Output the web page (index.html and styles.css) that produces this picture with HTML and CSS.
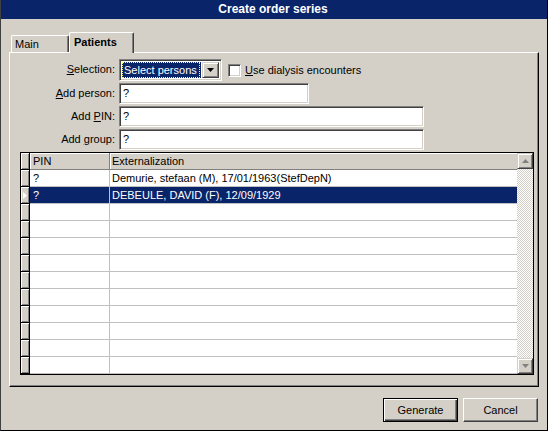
FILE: index.html
```html
<!DOCTYPE html>
<html>
<head>
<meta charset="utf-8">
<title>Create order series</title>
<link rel="stylesheet" href="styles.css">
</head>
<body>
<div class="window">
  <div class="titlebar">Create order series</div>
  <div class="body">
    <div class="tabs">
      <div class="tab">Main</div>
      <div class="tab active">Patients</div>
    </div>
    <div class="panel">
      <div class="form">
        <div class="lbl"><u>S</u>election:</div>
        <div class="ctrl-row">
          <div class="combo">
            <div class="combo-val"><span class="focus">Select persons</span></div>
            <div class="combo-btn"><svg width="7" height="4" viewBox="0 0 7 4"><path d="M0 0H7L3.5 4Z" fill="#000"/></svg></div>
          </div>
          <div class="check"><span class="box"></span><span><u>U</u>se dialysis encounters</span></div>
        </div>
        <div class="lbl"><u>A</u>dd person:</div>
        <div class="ctrl-row"><div class="input w-short">?</div></div>
        <div class="lbl">Add <u>P</u>IN:</div>
        <div class="ctrl-row"><div class="input w-long">?</div></div>
        <div class="lbl">Add <u>g</u>roup:</div>
        <div class="ctrl-row"><div class="input w-long">?</div></div>
      </div>
      <div class="grid">
        <div class="rows">
          <div class="row head">
            <div class="ind"></div>
            <div class="c1">PIN</div>
            <div class="c2">Externalization</div>
          </div>
          <div class="row">
            <div class="ind"></div>
            <div class="c1">?</div>
            <div class="c2">Demurie, stefaan (M), 17/01/1963(StefDepN)</div>
          </div>
          <div class="row sel">
            <div class="ind"><svg width="4" height="7" viewBox="0 0 4 7"><path d="M0 0L4 3.5L0 7Z" fill="#fff"/></svg></div>
            <div class="c1">?</div>
            <div class="c2">DEBEULE, DAVID (F), 12/09/1929</div>
          </div>
          <div class="row"><div class="ind"></div><div class="c1"></div><div class="c2"></div></div>
          <div class="row"><div class="ind"></div><div class="c1"></div><div class="c2"></div></div>
          <div class="row"><div class="ind"></div><div class="c1"></div><div class="c2"></div></div>
          <div class="row"><div class="ind"></div><div class="c1"></div><div class="c2"></div></div>
          <div class="row"><div class="ind"></div><div class="c1"></div><div class="c2"></div></div>
          <div class="row"><div class="ind"></div><div class="c1"></div><div class="c2"></div></div>
          <div class="row"><div class="ind"></div><div class="c1"></div><div class="c2"></div></div>
          <div class="row"><div class="ind"></div><div class="c1"></div><div class="c2"></div></div>
          <div class="row"><div class="ind"></div><div class="c1"></div><div class="c2"></div></div>
          <div class="row"><div class="ind"></div><div class="c1"></div><div class="c2"></div></div>
        </div>
        <div class="vscroll">
          <div class="sbtn"><svg width="7" height="4" viewBox="0 0 7 4"><path d="M0 4H7L3.5 0Z" fill="#808080"/></svg></div>
          <div class="track"></div>
          <div class="sbtn"><svg width="7" height="4" viewBox="0 0 7 4"><path d="M0 0H7L3.5 4Z" fill="#808080"/></svg></div>
        </div>
      </div>
    </div>
    <div class="buttons">
      <div class="btn default"><span>Generate</span></div>
      <div class="btn"><span>Cancel</span></div>
    </div>
  </div>
</div>
</body>
</html>
```
FILE: styles.css
```css
* { box-sizing: border-box; }
html, body { margin: 0; padding: 0; }
body {
  width: 548px;
  height: 431px;
  overflow: hidden;
  font-family: "Liberation Sans", Arial, sans-serif;
  font-size: 11px;
  color: #000;
  background: #d4d0c8;
}
.window {
  width: 548px;
  height: 431px;
  background: #d4d0c8;
  border-left: 1px solid #404040;
  border-right: 1px solid #000;
  border-bottom: 1px solid #000;
  display: flex;
  flex-direction: column;
}
.titlebar {
  height: 19px;
  background: #0a246a;
  color: #fff;
  font-weight: bold;
  font-size: 12px;
  line-height: 19px;
  text-align: center;
  padding-right: 2px;
}
.body {
  flex: 1;
  display: flex;
  flex-direction: column;
  padding: 13px 8px 0 8px;
}
.tabs {
  display: flex;
  align-items: flex-end;
  height: 20px;
  padding-left: 2px;
  position: relative;
  z-index: 2;
}
.tab {
  height: 17px;
  width: 58px;
  border-top: 1px solid #fff;
  border-left: 1px solid #fff;
  border-right: 1px solid #404040;
  border-radius: 2px 2px 0 0;
  box-shadow: inset -1px 0 #808080;
  padding: 2px 0 0 3px;
  line-height: 13px;
}
.tab.active {
  height: 21px;
  width: 65px;
  margin-bottom: -1px;
  background: #d4d0c8;
  font-weight: bold;
  padding: 3px 0 0 4px;
  line-height: 13px;
}
.panel {
  height: 335px;
  width: 530px;
  border-top: 1px solid #fff;
  border-left: 1px solid #fff;
  border-right: 1px solid #000;
  border-bottom: 1px solid #000;
  box-shadow: inset -1px -1px #808080;
  padding-top: 6px;
  display: flex;
  flex-direction: column;
}
.form {
  display: grid;
  grid-template-columns: 106px auto;
  grid-template-rows: 22px 21px 21px 21px;
  column-gap: 3px;
  row-gap: 2px;
}
.lbl {
  text-align: right;
  line-height: 20px;
  padding-right: 1px;
}
.ctrl-row {
  display: flex;
  align-items: flex-start;
}
.combo {
  width: 103px;
  height: 22px;
  border-top: 1px solid #808080;
  border-left: 1px solid #808080;
  border-right: 1px solid #fff;
  border-bottom: 1px solid #fff;
  box-shadow: inset 1px 1px #404040, inset -1px -1px #d4d0c8;
  background: #fff;
  padding: 2px;
  display: flex;
}
.combo-val {
  flex: 1;
  background: #0a246a;
  color: #fff;
  padding: 0 1px 0 0;
}
.focus {
  display: block;
  height: 100%;
  border: 1px dotted #ffff80;
  line-height: 14px;
  padding-left: 1px;
}
.combo-btn {
  width: 17px;
  background: #d4d0c8;
  border-top: 1px solid #d4d0c8;
  border-left: 1px solid #d4d0c8;
  border-right: 1px solid #404040;
  border-bottom: 1px solid #404040;
  box-shadow: inset 1px 1px #fff, inset -1px -1px #808080;
  display: flex;
  align-items: center;
  justify-content: center;
  margin-left: 1px;
}
.check {
  display: flex;
  align-items: center;
  margin-left: 6px;
  height: 20px;
  margin-top: 1px;
}
.box {
  width: 13px;
  height: 13px;
  background: #fff;
  border-top: 1px solid #808080;
  border-left: 1px solid #808080;
  border-right: 1px solid #fff;
  border-bottom: 1px solid #fff;
  box-shadow: inset 1px 1px #404040, inset -1px -1px #d4d0c8;
  margin-right: 4px;
}
.input {
  height: 21px;
  background: #fff;
  border-top: 1px solid #808080;
  border-left: 1px solid #808080;
  border-right: 1px solid #fff;
  border-bottom: 1px solid #fff;
  box-shadow: inset 1px 1px #404040, inset -1px -1px #d4d0c8;
  padding: 2px 3px;
  line-height: 15px;
}
.w-short { width: 190px; }
.w-long { width: 305px; }
.grid {
  margin: 2px 0 0 10px;
  width: 514px;
  height: 223px;
  border: 1px solid #000;
  background: #fff;
  display: flex;
}
.rows {
  flex: 1;
  display: flex;
  flex-direction: column;
}
.row {
  height: 17px;
  display: flex;
  line-height: 16px;
}
.row .ind {
  width: 9px;
  background: #d4d0c8;
  border-right: 1px solid #000;
  border-bottom: 1px solid #000;
  box-shadow: inset 1px 1px #fff, inset -1px -1px #808080;
  display: flex;
  align-items: center;
  justify-content: center;
}
.row .c1 {
  width: 80px;
  border-right: 1px solid #c0c0c0;
  border-bottom: 1px solid #c0c0c0;
  padding-left: 3px;
  white-space: nowrap;
}
.row .c2 {
  flex: 1;
  border-bottom: 1px solid #c0c0c0;
  padding-left: 2px;
  white-space: nowrap;
}
.row.head .c1, .row.head .c2 {
  background: #d4d0c8;
  border-color: #808080;
  box-shadow: inset 1px 1px #fff;
}
.row.sel .c1, .row.sel .c2 {
  background: #0a246a;
  color: #fff;
}
.vscroll {
  width: 16px;
  display: flex;
  flex-direction: column;
}
.sbtn {
  height: 16px;
  background: #d4d0c8;
  border-top: 1px solid #d4d0c8;
  border-left: 1px solid #d4d0c8;
  border-right: 1px solid #404040;
  border-bottom: 1px solid #404040;
  box-shadow: inset 1px 1px #fff, inset -1px -1px #808080;
  display: flex;
  align-items: center;
  justify-content: center;
}
.track {
  flex: 1;
  background: repeating-conic-gradient(#fff 0 25%, #d4d0c8 0 50%) 0 0 / 2px 2px;
}
.buttons {
  display: flex;
  justify-content: flex-end;
  gap: 5px;
  margin-top: 11px;
  padding-right: 1px;
}
.btn {
  width: 75px;
  height: 24px;
  border-top: 1px solid #fff;
  border-left: 1px solid #fff;
  border-right: 1px solid #404040;
  border-bottom: 1px solid #404040;
  box-shadow: inset -1px -1px #808080;
  display: flex;
  align-items: center;
  justify-content: center;
  line-height: 14px;
}
.btn.default {
  border: 1px solid #000;
  box-shadow: inset 1px 1px #fff, inset -1px -1px #404040, inset -2px -2px #808080;
}
```
